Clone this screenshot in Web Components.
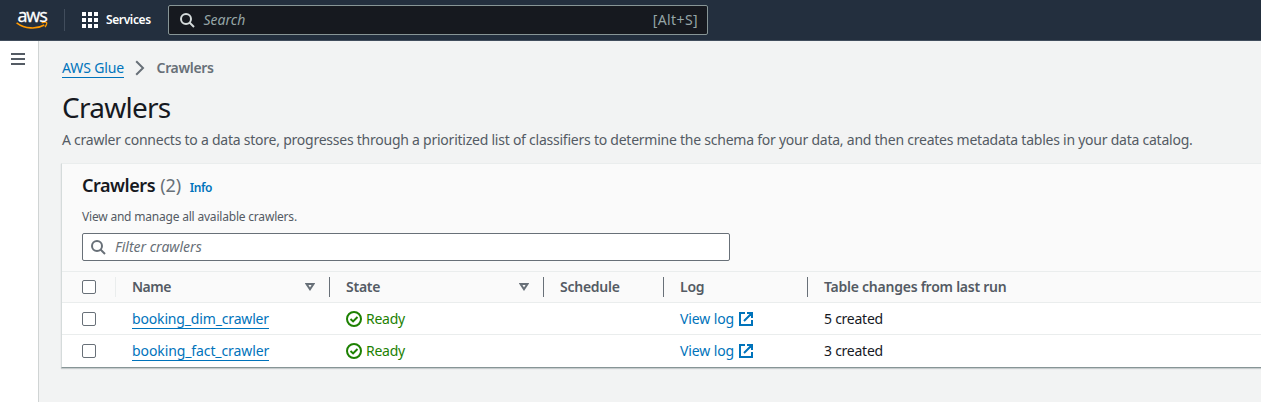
<!DOCTYPE html>
<html lang="en">
<head>
<meta charset="utf-8">
<title>Crawlers - AWS Glue</title>
<style>
html,body{margin:0;height:100%;overflow:hidden}
body{font:14px/22px "Noto Sans","Open Sans",sans-serif;color:#16191f;background:#f2f3f3}
</style>
</head>
<body>
<glue-app></glue-app>
<script>
const define = (name, css, html) => customElements.define(name, class extends HTMLElement {
  constructor() {
    super();
    this.attachShadow({mode: 'open'}).innerHTML = `<style>*{box-sizing:border-box}:host{box-sizing:border-box}svg{display:block;flex:none}${css}</style>` + html;
  }
});

/* Icons */
define('icon-search', ':host{display:block;width:16px;height:16px;flex:none}',
  `<svg width="16" height="16" viewBox="0 0 16 16" fill="none" stroke="currentColor" stroke-width="2"><circle cx="7" cy="7" r="5"/><path d="M10.5 10.5L15 15"/></svg>`);
define('icon-external', ':host{display:block;width:16px;height:16px;flex:none}',
  `<svg width="16" height="16" viewBox="0 0 16 16" fill="none" stroke="currentColor" stroke-width="2"><path d="M7 2H2v12h12V9M9 2h5v5M6 10l7.500-7.500"/></svg>`);
define('icon-success', ':host{display:block;width:16px;height:16px;flex:none}',
  `<svg width="16" height="16" viewBox="0 0 16 16" fill="none" stroke="currentColor" stroke-width="2"><circle cx="8" cy="8" r="7"/><path d="M4.500 8l2.600 2.400 4.400-4.400"/></svg>`);
define('icon-sort', ':host{display:block;width:10px;height:8px;flex:none}',
  `<svg width="10" height="8" viewBox="0 0 10 8" fill="none" stroke="currentColor" stroke-width="2"><path d="M1.600 1h6.800L5 6.200z"/></svg>`);
define('icon-chevron', ':host{display:block;width:10px;height:16px;flex:none}',
  `<svg width="10" height="16" viewBox="0 0 10 16" fill="none" stroke="currentColor" stroke-width="2"><path d="M1.200 1.200L8 8l-6.800 6.800"/></svg>`);
define('icon-grid', ':host{display:block;width:16px;height:16px;flex:none}',
  `<svg width="16" height="16" viewBox="0 0 16 16" fill="currentColor"><path d="M0 0h4v4H0zM6 0h4v4H6zM12 0h4v4h-4zM0 6h4v4H0zM6 6h4v4H6zM12 6h4v4h-4zM0 12h4v4H0zM6 12h4v4H6zM12 12h4v4h-4z"/></svg>`);

define('aws-logo', ':host{display:flex;flex-direction:column;align-items:center;width:32px;height:22px;color:#fff}span{font:400 18px/12px "Open Sans","Noto Sans",sans-serif;-webkit-text-stroke:.3px #fff;letter-spacing:-1.1px;height:13px}',
  `<span>aws</span><svg width="32" height="8" viewBox="0 0 32 8" fill="none" stroke="#f90"><path d="M.6 .8C9 7 20.500 7.500 28.300 3" stroke-width="1.600"/><path d="M25.600 .9c2-.8 4.300-.9 4.900-.4s0 2.800-1.500 4.500" stroke-width="1.300"/></svg>`);

define('search-box', `
:host{display:flex;align-items:center;width:648px;height:28px;padding:0 8px 0 7px;border:1px solid #687078;border-radius:2px;background:#fff;color:#687078}
.label{margin-left:9px;font-style:italic}
.hint{margin-left:auto}
`, `<icon-search></icon-search><span class="label"><slot></slot></span><span class="hint"><slot name="hint"></slot></span>`);

define('top-nav', `
:host{display:flex;align-items:center;height:41px;padding-left:16px;background:#232f3e;border-bottom:1px solid #414d5c;color:#fff}
.rule{width:1px;height:22px;background:#414d5c;margin:0 17px 0 16px}
.services{font-size:12px;font-weight:600;letter-spacing:-.38px;margin-left:8px;width:62px}
search-box{width:540px;height:30px;padding:0 9px 0 9.500px;background:#16191f;border-color:#879596;color:#d5dbdb}
.ph{color:#95a5a6}.key{color:#95a5a6;letter-spacing:.4px}
`, `<aws-logo></aws-logo><div class="rule"></div><icon-grid></icon-grid><span class="services">Services</span>
<search-box><span class="ph">Search</span><span class="key" slot="hint">[Alt+S]</span></search-box>`);

define('side-rail', `
:host{display:block;width:39px;flex:none;background:#fff;border-right:1px solid #d0d4d4;padding:12px 0 0 11px;color:#545b64}
`, `<svg width="14" height="12" viewBox="0 0 14 12" fill="currentColor"><path d="M0 0h14v2H0zM0 5h14v2H0zM0 10h14v2H0z"/></svg>`);

define('ui-link', `
:host{display:inline-flex;color:#0073bb}
span{height:20px;line-height:20px;border-bottom:1px solid #0073bb}
`, `<span><slot></slot></span>`);

define('page-header', `
:host{display:block}
nav{display:flex;align-items:center;height:22px}
ui-link{letter-spacing:-.13px}
icon-chevron{margin:0 11px 0 11px;color:#687078}
b{font-weight:600;color:#687078;letter-spacing:-.33px;margin-left:.5px}
h1{margin:10px 0 0;font:400 28px/36px "Noto Sans",sans-serif;letter-spacing:-.75px}
p{margin:4px 0 0;color:#545b64;letter-spacing:-.24px;white-space:nowrap}
`, `<nav><ui-link>AWS Glue</ui-link><icon-chevron></icon-chevron><b>Crawlers</b></nav>
<h1>Crawlers</h1>
<p>A crawler connects to a data store, progresses through a prioritized list of classifiers to determine the schema for your data, and then creates metadata tables in your data catalog.</p>`);

define('check-box', ':host{display:block;width:14px;height:14px;border:1px solid #687078;border-radius:2px;background:#fff}', '');

define('table-row', `
:host{display:grid;grid-template-columns:54px 214px 214px 120px 144px 1fr;height:32px;border-bottom:1px solid #eaeded;background:#fff;align-items:center}
.pick{display:flex;align-items:center;height:20px;padding-left:20px;border-right:1px solid var(--pick-rule,transparent)}
::slotted(*){padding-left:16px;display:flex;align-items:center;white-space:nowrap}
`, `<div class="pick"><check-box></check-box></div><slot></slot>`);

define('head-cell', `
:host{height:20px;border-right:1px solid #687078;font-weight:600;color:#545b64}
:host(:last-child){border:0}
icon-sort{display:none;margin:0 14px 0 auto;color:#687078}
:host([sort]) icon-sort{display:block}
`, `<slot></slot><icon-sort></icon-sort>`);

define('crawler-row', ':host{display:block}:host(:last-child) table-row{border-bottom-color:#fff}.n{letter-spacing:var(--name-spacing,-.16px)}.s{color:#1d8102;letter-spacing:-.25px}.s icon-success{margin-right:4px}.l{color:#0073bb;letter-spacing:-.12px}.l icon-external{margin:0 0 0 4px}.c{letter-spacing:-.25px}',
  `<table-row><div class="n"><ui-link><slot name="name"></slot></ui-link></div>
<div class="s"><icon-success></icon-success>Ready</div><div></div>
<div class="l">View log<icon-external></icon-external></div><div class="c"><slot name="changes"></slot></div></table-row>`);

define('crawlers-panel', `
:host{display:block;margin:12px 0 0 -1px;border:1px solid #d5dbdb;border-top-color:#eaeded;border-right:0;border-bottom-color:#879596;background:#fafafa;box-shadow:0 1px 1px rgba(0,28,36,.18)}
.top{padding:10px 20px 10px;height:108px;border-bottom:1px solid #eaeded}
.title{display:flex;align-items:baseline;height:22px;font-size:18px}
h2{margin:0;font-size:18px;line-height:22px;font-weight:600;letter-spacing:-.45px}
.count{color:#687078;margin-left:5px}
.info{font-size:12px;font-weight:600;color:#0073bb;margin-left:8.500px;letter-spacing:-.4px}
.sub{font-size:12px;line-height:18px;color:#545b64;margin:12px 0 7px;letter-spacing:-.2px}
.head{height:31px;background:#fafafa;--pick-rule:#eaeded}
.head>*{letter-spacing:-.25px}.head>:first-child{letter-spacing:-.5px}
`, `<div class="top"><div class="title"><h2>Crawlers</h2><span class="count">(2)</span><span class="info">Info</span></div>
<div class="sub">View and manage all available crawlers.</div>
<search-box>Filter crawlers</search-box></div>
<table-row class="head"><head-cell sort>Name</head-cell><head-cell sort>State</head-cell><head-cell>Schedule</head-cell><head-cell>Log</head-cell><head-cell>Table changes from last run</head-cell></table-row>
<crawler-row><span slot="name">booking_dim_crawler</span><span slot="changes">5 created</span></crawler-row>
<crawler-row style="--name-spacing:-.1px"><span slot="name">booking_fact_crawler</span><span slot="changes">3 created</span></crawler-row>`);

define('glue-app', `
:host{display:flex;flex-direction:column;height:100vh}
.body{display:flex;flex:1;min-height:0}
main{flex:1;min-width:0;padding:16px 0 0 23px}
`, `<top-nav></top-nav><div class="body"><side-rail></side-rail><main><page-header></page-header><crawlers-panel></crawlers-panel></main></div>`);
</script>
</body>
</html>
